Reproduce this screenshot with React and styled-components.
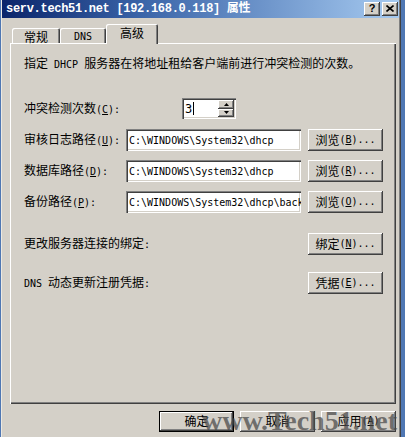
import React from 'react';
import styled, { createGlobalStyle } from 'styled-components';

const CJK = `"Noto Sans CJK SC", "Noto Sans", sans-serif`;
const MONO = `"DejaVu Sans Mono", "Noto Sans CJK SC", monospace`;

const GlobalStyle = createGlobalStyle`
  *, *::before, *::after { box-sizing: border-box; }
  html, body { margin: 0; padding: 0; }
  body { width: 405px; height: 437px; overflow: hidden; background: #4f77b3; }
`;

const Screen = styled.div`
  position: relative;
  width: 405px;
  height: 437px;
  overflow: hidden;
  background: #4f77b3;
`;

const Window = styled.div`
  margin-left: 1px;
  width: 400px;
  height: 437px;
  background: #d4d0c8;
  box-shadow: inset 1px 0 #ece9e2, inset -1px 0 #404040, inset -2px 0 #808080;
  display: flex;
  flex-direction: column;
  font-family: ${CJK};
  font-size: 12px;
  color: #000;
`;

const TitleBar = styled.div`
  height: 18px;
  margin: 0 2px 0 1px;
  padding: 0 1px 0 4px;
  display: flex;
  align-items: center;
  background: linear-gradient(90deg, #0a246a 0%, #3a64a8 35%, #a6caf0 100%);
`;

const TitleText = styled.div`
  flex: 1;
  color: #fff;
  font-family: "Liberation Mono", "Noto Sans CJK SC", monospace;
  font-weight: bold;
  font-size: 12px;
  letter-spacing: -0.3px;
  white-space: nowrap;
  line-height: 18px;
`;

const CaptionButtons = styled.div`
  display: flex;
  gap: 2px;
`;

const CaptionButton = styled.div`
  width: 16px;
  height: 14px;
  background: #d4d0c8;
  box-shadow: inset -1px -1px #404040, inset 1px 1px #fff, inset -2px -2px #808080;
  display: flex;
  align-items: center;
  justify-content: center;
  font-family: "Liberation Sans", sans-serif;
  font-weight: bold;
  font-size: 11px;
  line-height: 1;
  color: #000;
  padding-bottom: 1px;
`;

const Body = styled.div`
  flex: 1;
  display: flex;
  flex-direction: column;
  padding: 0 5px 0 9px;
`;

const TabStrip = styled.div`
  margin-top: 7px;
  height: 18px;
  padding-left: 2px;
  display: flex;
  align-items: flex-end;
`;

const Tab = styled.div`
  position: relative;
  z-index: ${(p) => (p.$active ? 1 : 0)};
  width: ${(p) => p.$w}px;
  height: ${(p) => (p.$active ? 20 : 15)}px;
  margin-bottom: ${(p) => (p.$active ? -1 : 0)}px;
  background: #d4d0c8;
  border-radius: 2px 2px 0 0;
  box-shadow: inset 1px 1px #fff, inset -1px 0 #404040, inset -2px 0 #808080;
  display: flex;
  justify-content: center;
  align-items: center;
  padding-top: ${(p) => (p.$active ? 0 : 2)}px;
  padding-bottom: ${(p) => (p.$active ? 2 : 0)}px;
  line-height: 14px;
`;

const Panel = styled.div`
  height: 361px;
  background: #d4d0c8;
  box-shadow: inset 1px 1px #fff, inset -1px -1px #404040, inset -2px -2px #808080;
  padding: 13px 13px 0 14px;
  display: flex;
  flex-direction: column;
`;

const Latin = styled.span`
  font-family: ${MONO};
  font-size: 10px;
`;

const Description = styled.div`
  line-height: 14px;
  white-space: nowrap;
`;

const SpinRow = styled.div`
  margin-top: 26px;
  display: grid;
  grid-template-columns: 158px 54px;
  align-items: center;
  height: 21px;
`;

const Label = styled.div`
  white-space: nowrap;
  line-height: 14px;
`;

const Sunken = styled.div`
  background: #fff;
  box-shadow: inset 1px 1px #808080, inset 2px 2px #404040, inset -1px -1px #fff, inset -2px -2px #d4d0c8;
`;

const SpinBox = styled(Sunken)`
  height: 21px;
  display: flex;
  padding: 2px;
`;

const SpinEdit = styled.div`
  flex: 1;
  display: flex;
  align-items: center;
  padding-left: 1px;
  font-family: ${MONO};
  font-size: 12px;
`;

const Caret = styled.span`
  display: inline-block;
  width: 1px;
  height: 13px;
  margin-left: 1px;
  background: #000;
`;

const SpinButtons = styled.div`
  width: 16px;
  display: flex;
  flex-direction: column;
`;

const SpinButton = styled.div`
  flex: 1;
  background: #d4d0c8;
  box-shadow: inset -1px -1px #404040, inset 1px 1px #fff, inset -2px -2px #808080;
  display: flex;
  align-items: center;
  justify-content: center;
`;

const FieldGrid = styled.div`
  margin-top: 10px;
  display: grid;
  grid-template-columns: 95px 175px 75px;
  grid-auto-rows: 22px;
  column-gap: 7px;
  row-gap: 9px;
  align-items: center;
`;

const PathInput = styled(Sunken)`
  height: 22px;
  padding: 0 3px;
  display: flex;
  align-items: center;
  overflow: hidden;
  white-space: nowrap;
  font-family: ${MONO};
  font-size: 10px;
`;

const Button = styled.div`
  width: 75px;
  height: ${(p) => p.$h || 22}px;
  background: #d4d0c8;
  border: ${(p) => (p.$default ? '1px solid #000' : 'none')};
  box-shadow: inset -1px -1px #404040, inset 1px 1px #fff, inset -2px -2px #808080;
  display: flex;
  align-items: center;
  justify-content: center;
  white-space: nowrap;
  line-height: 14px;
  padding-bottom: 1px;
`;

const ActionRow = styled.div`
  margin-top: ${(p) => p.$gap}px;
  height: 22px;
  display: flex;
  align-items: center;
  justify-content: space-between;
`;

const DialogButtons = styled.div`
  margin-top: 7px;
  display: flex;
  justify-content: flex-end;
  gap: 6px;
`;

const Watermark = styled.div`
  position: absolute;
  left: 202px;
  top: 407px;
  font-family: "Liberation Serif", serif;
  font-weight: bold;
  font-size: 28px;
  line-height: 28px;
  color: rgba(72, 72, 72, 0.72);
  white-space: nowrap;
  pointer-events: none;
`;

const Accel = ({ k, suffix = '' }) => (
  <Latin>
    (<u>{k}</u>){suffix}
  </Latin>
);

const Arrow = ({ up }) => (
  <svg width="5" height="3" viewBox="0 0 5 3">
    <path d={up ? 'M0 3 L2.5 0 L5 3 Z' : 'M0 0 L2.5 3 L5 0 Z'} fill="#000" />
  </svg>
);

const paths = [
  { label: '审核日志路径', key: 'U', value: 'C:\\WINDOWS\\System32\\dhcp', btn: 'B' },
  { label: '数据库路径', key: 'D', value: 'C:\\WINDOWS\\System32\\dhcp', btn: 'R' },
  { label: '备份路径', key: 'P', value: 'C:\\WINDOWS\\System32\\dhcp\\backup', btn: 'O' },
];

export default function App() {
  return (
    <>
      <GlobalStyle />
      <Screen>
        <Window>
          <TitleBar>
            <TitleText>serv.tech51.net [192.168.0.118] 属性</TitleText>
            <CaptionButtons>
              <CaptionButton>?</CaptionButton>
              <CaptionButton>
                <svg width="8" height="7" viewBox="0 0 8 7">
                  <path d="M0.5 0.5 L7.5 6.5 M7.5 0.5 L0.5 6.5" stroke="#000" strokeWidth="1.6" fill="none" />
                </svg>
              </CaptionButton>
            </CaptionButtons>
          </TitleBar>
          <Body>
            <TabStrip>
              <Tab $w={48}>常规</Tab>
              <Tab $w={46}><Latin>DNS</Latin></Tab>
              <Tab $w={52} $active>高级</Tab>
            </TabStrip>
            <Panel>
              <Description>
                指定<Latin> DHCP </Latin>服务器在将地址租给客户端前进行冲突检测的次数。
              </Description>
              <SpinRow>
                <Label>冲突检测次数<Accel k="C" suffix=":" /></Label>
                <SpinBox>
                  <SpinEdit>3<Caret /></SpinEdit>
                  <SpinButtons>
                    <SpinButton><Arrow up /></SpinButton>
                    <SpinButton><Arrow /></SpinButton>
                  </SpinButtons>
                </SpinBox>
              </SpinRow>
              <FieldGrid>
                {paths.map((p) => (
                  <React.Fragment key={p.key}>
                    <Label>{p.label}<Accel k={p.key} suffix=":" /></Label>
                    <PathInput>{p.value}</PathInput>
                    <Button>浏览<Accel k={p.btn} suffix="..." /></Button>
                  </React.Fragment>
                ))}
              </FieldGrid>
              <ActionRow $gap={20}>
                <Label>更改服务器连接的绑定<Latin>:</Latin></Label>
                <Button>绑定<Accel k="N" suffix="..." /></Button>
              </ActionRow>
              <ActionRow $gap={17}>
                <Label><Latin>DNS </Latin>动态更新注册凭据<Latin>:</Latin></Label>
                <Button>凭据<Accel k="E" suffix="..." /></Button>
              </ActionRow>
            </Panel>
            <DialogButtons>
              <Button $h={21} $default>确定</Button>
              <Button $h={21}>取消</Button>
              <Button $h={21}>应用<Accel k="A" /></Button>
            </DialogButtons>
          </Body>
        </Window>
        <Watermark>www.Tech51.net</Watermark>
      </Screen>
    </>
  );
}
